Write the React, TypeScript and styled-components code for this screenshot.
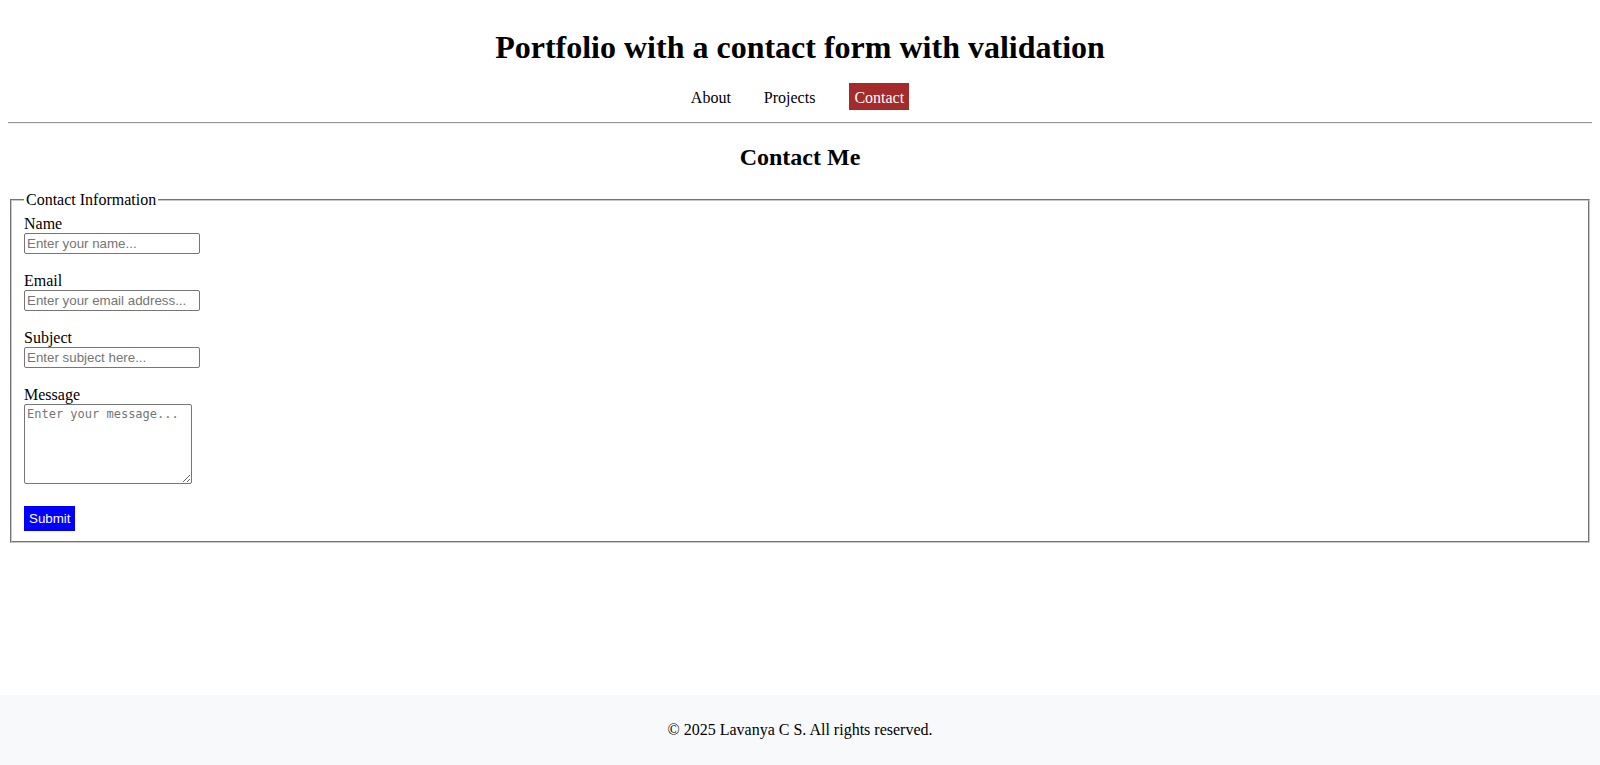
import React from "react";
import styled, { createGlobalStyle } from "styled-components";

const GlobalStyle = createGlobalStyle`
  html, body {
    margin: 0;
    padding: 0;
    background: #ffffff;
  }
  body {
    font-family: "Liberation Serif", "Times New Roman", serif;
    font-size: 16px;
    color: #000000;
  }
  * { box-sizing: border-box; }
`;

const Page = styled.div`
  min-height: 100vh;
  display: flex;
  flex-direction: column;
`;

const Content = styled.div`
  padding: 8px 8px 0;
`;

const Header = styled.header`
  text-align: center;
`;

const Title = styled.h1`
  margin: 21.44px 0 0;
  font-size: 32px;
  font-weight: bold;
  line-height: normal;
`;

const Nav = styled.nav`
  display: flex;
  justify-content: center;
  gap: 23px;
  margin-top: 17px;
  padding-right: 5px;
`;

const NavLink = styled.a<{ $active?: boolean; $lead?: number }>`
  display: block;
  margin-left: ${(p) => p.$lead ?? 0}px;
  padding: 6px 5px 3px;
  color: ${(p) => (p.$active ? "#ffffff" : "#000000")};
  background: ${(p) => (p.$active ? "#a52a2a" : "transparent")};
  text-decoration: none;
  font-size: 16px;
  line-height: normal;
  cursor: pointer;
`;

const Rule = styled.hr`
  margin: 12px 0 0;
  border: 0;
  border-top: 1px solid #9a9a9a;
  border-bottom: 1px solid #eeeeee;
  height: 0;
`;

const Section = styled.section`
  display: flow-root;
`;

const SectionTitle = styled.h2`
  margin: 19.92px 0 20px;
  text-align: center;
  font-size: 24px;
  font-weight: bold;
  line-height: normal;
`;

const Form = styled.form`
  margin: 0;
`;

const Fieldset = styled.fieldset`
  margin: 0 2px;
  padding: 0.35em 0.75em 0.625em;
  border: 2px groove rgb(200, 200, 200);
  min-width: min-content;
`;

const Legend = styled.legend`
  padding: 0 2px;
  font-size: 16px;
  line-height: normal;
`;

const Group = styled.div<{ $space: number }>`
  display: flex;
  flex-direction: column;
  align-items: flex-start;
  margin-bottom: ${(p) => p.$space}px;
`;

const Label = styled.label`
  display: block;
  font-size: 16px;
  line-height: 18.4px;
`;

const TextInput = styled.input`
  display: block;
  width: 176px;
  height: 21px;
  margin: 0;
  padding: 1px 2px;
  border: 1px solid #767676;
  border-radius: 2px;
  font-family: "Liberation Sans", Arial, sans-serif;
  font-size: 13.333px;
  color: #000;
  background: #fff;
  outline: none;

  &::placeholder {
    color: #757575;
  }
`;

const MessageArea = styled.textarea`
  display: block;
  width: 168px;
  height: 80px;
  margin: 0;
  padding: 2px;
  border: 1px solid #767676;
  border-radius: 2px;
  font-family: "DejaVu Sans Mono", "Liberation Mono", monospace;
  font-size: 12px;
  line-height: 15px;
  color: #000;
  background: #fff;
  outline: none;

  &::placeholder {
    color: #757575;
  }
`;

const SubmitButton = styled.button`
  display: block;
  margin: 0;
  padding: 5px 5px;
  height: 25px;
  border: none;
  background: #0000ff;
  color: #ffffff;
  font-family: "Liberation Sans", Arial, sans-serif;
  font-size: 13.333px;
  line-height: 15px;
  cursor: pointer;
`;

const Footer = styled.footer`
  margin-top: auto;
  width: 100%;
  padding: 10px;
  background: #f8f9fa;
  text-align: center;
`;

const FooterText = styled.p`
  margin: 16px 0;
  font-size: 16px;
  line-height: 18.4px;
`;

export default function App() {
  const fields = [
    { id: "name", label: "Name", placeholder: "Enter your name...", type: "text" },
    { id: "email", label: "Email", placeholder: "Enter your email address...", type: "email" },
    { id: "subject", label: "Subject", placeholder: "Enter subject here...", type: "text" },
  ];

  return (
    <>
      <GlobalStyle />
      <Page>
        <Content>
          <Header>
            <Title>Portfolio with a contact form with validation</Title>
            <Nav>
              <NavLink>About</NavLink>
              <NavLink>Projects</NavLink>
              <NavLink $active $lead={6}>Contact</NavLink>
            </Nav>
          </Header>
          <Rule />
          <Section>
            <SectionTitle>Contact Me</SectionTitle>
            <Form onSubmit={(e) => e.preventDefault()} noValidate>
              <Fieldset>
                <Legend>Contact Information</Legend>
                {fields.map((f) => (
                  <Group key={f.id} $space={17.6}>
                    <Label htmlFor={f.id}>{f.label}</Label>
                    <TextInput id={f.id} type={f.type} placeholder={f.placeholder} />
                  </Group>
                ))}
                <Group $space={22}>
                  <Label htmlFor="message">Message</Label>
                  <MessageArea id="message" placeholder="Enter your message..." />
                </Group>
                <SubmitButton type="submit">Submit</SubmitButton>
              </Fieldset>
            </Form>
          </Section>
        </Content>
        <Footer>
          <FooterText>© 2025 Lavanya C S. All rights reserved.</FooterText>
        </Footer>
      </Page>
    </>
  );
}
